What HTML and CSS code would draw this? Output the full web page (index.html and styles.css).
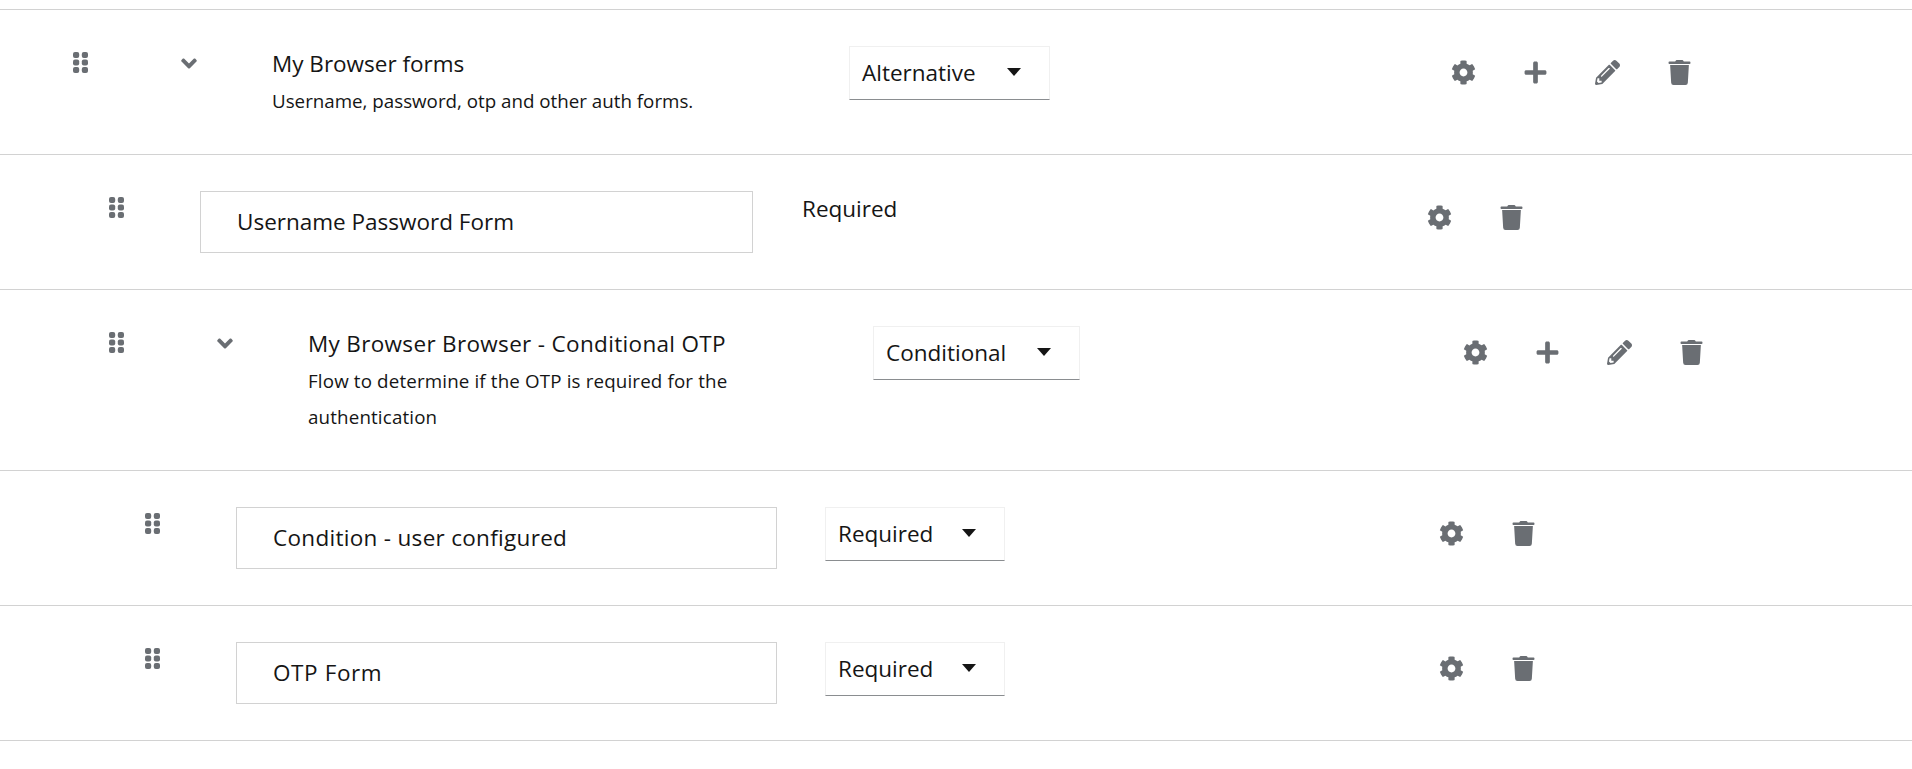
FILE: index.html
```html
<!DOCTYPE html>
<html lang="en">
<head>
<meta charset="utf-8">
<title>Authentication flow</title>
<link rel="stylesheet" href="styles.css">
</head>
<body>
<svg class="sprites" aria-hidden="true">
  <symbol id="i-grip" viewBox="0 0 15 21"><rect x="0" y="0" width="6.2" height="6" rx="2"/><rect x="8.8" y="0" width="6.2" height="6" rx="2"/><rect x="0" y="7.5" width="6.2" height="6" rx="2"/><rect x="8.8" y="7.5" width="6.2" height="6" rx="2"/><rect x="0" y="15" width="6.2" height="6" rx="2"/><rect x="8.8" y="15" width="6.2" height="6" rx="2"/></symbol>
  <symbol id="i-angle" viewBox="0 0 320 512"><path d="M143 352.3L7 216.3c-9.4-9.4-9.4-24.6 0-33.9l22.6-22.6c9.4-9.4 24.6-9.4 33.9 0l96.4 96.4 96.4-96.4c9.4-9.4 24.6-9.4 33.9 0l22.6 22.6c9.4 9.4 9.4 24.6 0 33.9l-136 136c-9.2 9.4-24.4 9.4-33.8 0z"/></symbol>
  <symbol id="i-cog" viewBox="0 0 512 512"><path d="M487.4 315.7l-42.6-24.6c4.3-23.2 4.3-47 0-70.2l42.6-24.6c4.9-2.8 7.1-8.6 5.5-14-11.1-35.6-30-67.8-54.7-94.6-3.8-4.1-10-5.1-14.8-2.3L380.8 110c-17.9-15.4-38.5-27.3-60.8-35.1V25.8c0-5.6-3.9-10.5-9.4-11.7-36.7-8.2-74.3-7.8-109.2 0-5.5 1.2-9.4 6.1-9.4 11.7V75c-22.2 7.9-42.8 19.8-60.8 35.1L88.7 85.5c-4.9-2.8-11-1.9-14.8 2.3-24.7 26.7-43.6 58.9-54.7 94.6-1.7 5.4.6 11.2 5.5 14L67.3 221c-4.3 23.2-4.3 47 0 70.2l-42.6 24.6c-4.9 2.8-7.1 8.6-5.5 14 11.1 35.6 30 67.8 54.7 94.6 3.8 4.1 10 5.1 14.8 2.3l42.6-24.6c17.9 15.4 38.5 27.3 60.8 35.1v49.2c0 5.6 3.9 10.5 9.4 11.7 36.7 8.2 74.3 7.8 109.2 0 5.5-1.2 9.4-6.1 9.4-11.7v-49.2c22.2-7.9 42.8-19.8 60.8-35.1l42.6 24.6c4.9 2.8 11 1.9 14.8-2.3 24.7-26.7 43.6-58.9 54.7-94.6 1.5-5.5-.7-11.3-5.6-14.1zM256 336c-44.1 0-80-35.9-80-80s35.9-80 80-80 80 35.9 80 80-35.9 80-80 80z"/></symbol>
  <symbol id="i-plus" viewBox="0 0 448 512"><path d="M416 208H272V64c0-17.67-14.33-32-32-32h-32c-17.67 0-32 14.33-32 32v144H32c-17.67 0-32 14.33-32 32v32c0 17.67 14.33 32 32 32h144v144c0 17.67 14.33 32 32 32h32c17.67 0 32-14.33 32-32V304h144c17.67 0 32-14.33 32-32v-32c0-17.67-14.33-32-32-32z"/></symbol>
  <symbol id="i-pencil" viewBox="0 0 512 512"><path d="M497.9 142.1l-46.1 46.1c-4.7 4.7-12.3 4.7-17 0l-111-111c-4.7-4.7-4.7-12.3 0-17l46.1-46.1c18.7-18.7 49.1-18.7 67.9 0l60.1 60.1c18.8 18.7 18.8 49.1 0 67.9zM284.2 99.8L21.6 362.4.4 483.9c-2.9 16.4 11.4 30.6 27.8 27.8l121.5-21.3 262.6-262.6c4.7-4.7 4.7-12.3 0-17l-111-111c-4.8-4.7-12.4-4.7-17.1 0zM124.1 339.9c-5.5-5.5-5.5-14.3 0-19.8l154-154c5.5-5.5 14.3-5.5 19.8 0s5.5 14.3 0 19.8l-154 154c-5.5 5.5-14.3 5.5-19.8 0zM88 424h48v36.3l-64.5 11.3-31.1-31.1L51.7 376H88v48z"/></symbol>
  <symbol id="i-trash" viewBox="0 0 448 512"><path d="M432 32H312l-9.4-18.7A24 24 0 0 0 281.1 0H166.8a23.72 23.72 0 0 0-21.4 13.3L136 32H16A16 16 0 0 0 0 48v16a16 16 0 0 0 16 16h416a16 16 0 0 0 16-16V48a16 16 0 0 0-16-16zM53.2 467a48 48 0 0 0 47.9 45h245.8a48 48 0 0 0 47.9-45L416 104H32z"/></symbol>
</svg>
<ul class="flow-list">
  <li class="row row--flow-top">
    <svg class="icon-grip"><use href="#i-grip"/></svg>
    <svg class="icon-angle"><use href="#i-angle"/></svg>
    <div class="flow-text">
      <div class="flow-title">My Browser forms</div>
      <div class="flow-desc">Username, password, otp and other auth forms.</div>
    </div>
    <div class="select select--alternative"><span>Alternative</span><span class="caret"></span></div>
    <div class="actions">
      <svg class="icon"><use href="#i-cog"/></svg>
      <svg class="icon"><use href="#i-plus"/></svg>
      <svg class="icon"><use href="#i-pencil"/></svg>
      <svg class="icon"><use href="#i-trash"/></svg>
    </div>
  </li>
  <li class="row row--step-one">
    <svg class="icon-grip"><use href="#i-grip"/></svg>
    <div class="step-box">Username Password Form</div>
    <div class="plain-req">Required</div>
    <div class="actions">
      <svg class="icon"><use href="#i-cog"/></svg>
      <svg class="icon"><use href="#i-trash"/></svg>
    </div>
  </li>
  <li class="row row--flow-sub">
    <svg class="icon-grip"><use href="#i-grip"/></svg>
    <svg class="icon-angle"><use href="#i-angle"/></svg>
    <div class="flow-text">
      <div class="flow-title flow-title--wide">My Browser Browser - Conditional OTP</div>
      <div class="flow-desc flow-desc--wide">Flow to determine if the OTP is required for the<br>authentication</div>
    </div>
    <div class="select select--conditional"><span>Conditional</span><span class="caret"></span></div>
    <div class="actions">
      <svg class="icon"><use href="#i-cog"/></svg>
      <svg class="icon"><use href="#i-plus"/></svg>
      <svg class="icon"><use href="#i-pencil"/></svg>
      <svg class="icon"><use href="#i-trash"/></svg>
    </div>
  </li>
  <li class="row row--step-two">
    <svg class="icon-grip"><use href="#i-grip"/></svg>
    <div class="step-box step-box--wide">Condition - user configured</div>
    <div class="select select--required"><span>Required</span><span class="caret"></span></div>
    <div class="actions">
      <svg class="icon"><use href="#i-cog"/></svg>
      <svg class="icon"><use href="#i-trash"/></svg>
    </div>
  </li>
  <li class="row row--step-two">
    <svg class="icon-grip"><use href="#i-grip"/></svg>
    <div class="step-box step-box--otp">OTP Form</div>
    <div class="select select--required"><span>Required</span><span class="caret"></span></div>
    <div class="actions">
      <svg class="icon"><use href="#i-cog"/></svg>
      <svg class="icon"><use href="#i-trash"/></svg>
    </div>
  </li>
</ul>
</body>
</html>
```
FILE: styles.css
```css
* { box-sizing: border-box; }
html, body { margin: 0; padding: 0; background: #fff; }
body {
  font-family: "Open Sans", "Liberation Sans", sans-serif;
  font-weight: 400;
  color: #151515;
  overflow: hidden;
  height: 769px;
}
.sprites { display: none; }
.flow-list {
  list-style: none;
  margin: 9px 0 0;
  padding: 0;
  border-top: 1px solid #d2d2d2;
}
.row {
  display: grid;
  align-items: start;
  padding-top: 36px;
  padding-bottom: 36px;
  border-bottom: 1px solid #d2d2d2;
}
.row--flow-top { padding-left: 73px; padding-bottom: 35px; grid-template-columns: 108px 91px 577px 601.5px auto; }
.row--flow-sub { padding-left: 109px; padding-bottom: 35px; grid-template-columns: 108px 91px 565px 589.5px auto; }
.row--step-one { padding-left: 109px; grid-template-columns: 91px 602px 624.5px auto; }
.row--step-two { padding-left: 145px; grid-template-columns: 91px 589px 613.5px auto; }

.icon-grip { width: 15px; height: 21px; margin-top: 6px; fill: #6a6e73; display: block; }
.icon-angle { width: 16px; height: 25px; margin-top: 5px; fill: #6a6e73; display: block; }

.flow-title { font-size: 22.5px; line-height: 36px; margin-bottom: 1px; }
.flow-title--wide { letter-spacing: 0.33px; }
.flow-desc { font-size: 18.75px; line-height: 36px; }
.flow-desc--wide { letter-spacing: 0.15px; }

.step-box {
  height: 62px;
  border: 1px solid #d2d2d2;
  padding-left: 36px;
  font-size: 22.5px;
  line-height: 60px;
}
.step-box--wide { letter-spacing: 0.3px; }
.step-box--otp { letter-spacing: 0.6px; }
.row--step-one .step-box { width: 553px; }
.row--step-two .step-box { width: 541px; }

.plain-req { font-size: 22.5px; line-height: 30px; padding-top: 3px; }

.select {
  height: 54px;
  border: 1px solid #f0f0f0;
  border-bottom-color: #8a8d90;
  padding: 0 28px 2px 12px;
  display: flex;
  align-items: center;
  justify-content: space-between;
  font-size: 22.5px;
}
.select--alternative { width: 201px; }
.select--conditional { width: 207px; }
.select--required { width: 180px; }
.caret {
  width: 0;
  height: 0;
  border-left: 7.5px solid transparent;
  border-right: 7.5px solid transparent;
  border-top: 8px solid #151515;
}
.actions { display: flex; gap: 47px; padding-top: 14px; }
.icon { width: 25px; height: 25px; fill: #6a6e73; display: block; }
```
